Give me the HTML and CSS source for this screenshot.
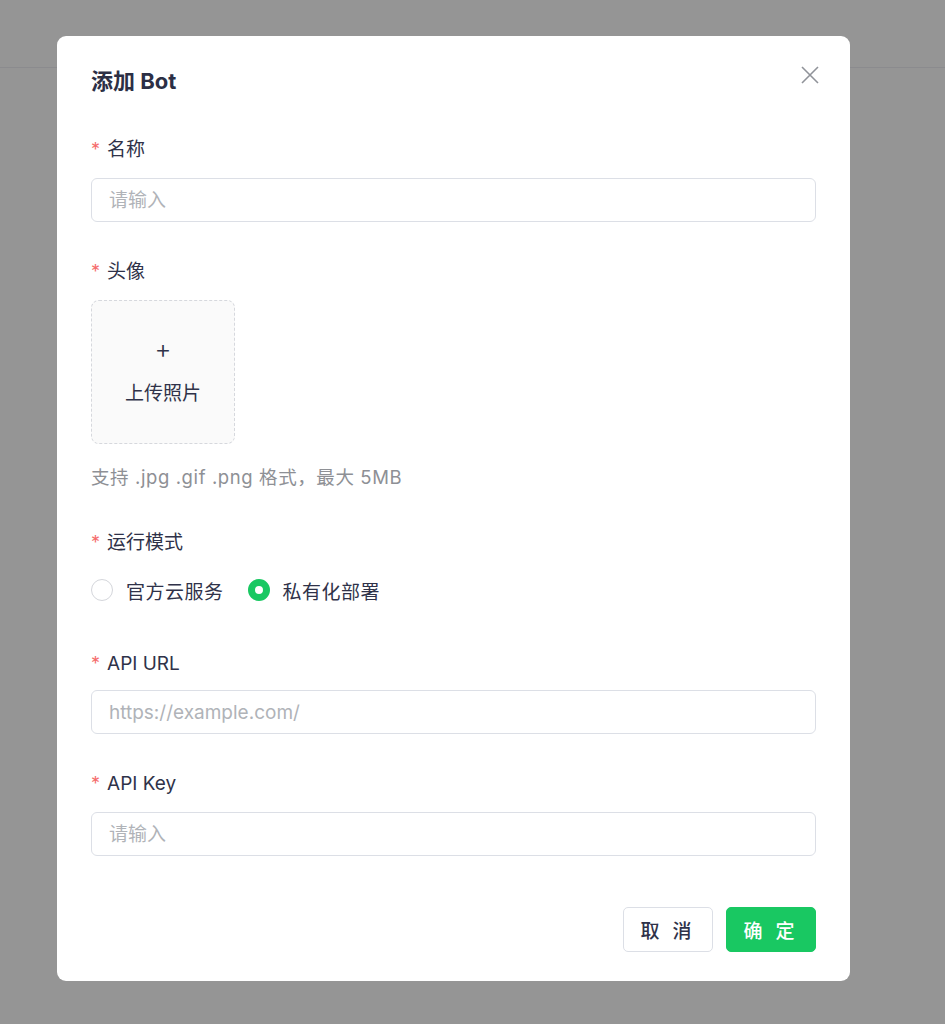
FILE: index.html
```html
<!DOCTYPE html>
<html lang="zh-CN">
<head>
    <meta charset="UTF-8">
    <meta name="viewport" content="width=device-width, initial-scale=1.0">
    <title>添加 Bot</title>
    <link rel="stylesheet" href="styles.css">
</head>
<body>
    <div class="page-header"></div>

    <div class="overlay">
        <div class="dialog">
            <div class="dialog-header">
                <span class="dialog-title">添加 Bot</span>
                <button class="dialog-close" aria-label="关闭">
                    <svg width="20" height="20" viewBox="0 0 20 20">
                        <path d="M2 2 L18 18 M18 2 L2 18" stroke="#909399" stroke-width="1.6" fill="none"/>
                    </svg>
                </button>
            </div>

            <form class="form">
                <div class="form-item">
                    <label class="form-label"><span class="req">*</span>名称</label>
                    <input class="input" type="text" placeholder="请输入">
                </div>

                <div class="form-item">
                    <label class="form-label"><span class="req">*</span>头像</label>
                    <div class="upload">
                        <span class="upload-plus">+</span>
                        <span class="upload-text">上传照片</span>
                    </div>
                    <div class="form-tip">支持 .jpg .gif .png 格式，最大 5MB</div>
                </div>

                <div class="form-item">
                    <label class="form-label"><span class="req">*</span>运行模式</label>
                    <div class="radio-group">
                        <label class="radio">
                            <span class="radio-circle"></span>
                            <span class="radio-label">官方云服务</span>
                        </label>
                        <label class="radio checked">
                            <span class="radio-circle"></span>
                            <span class="radio-label">私有化部署</span>
                        </label>
                    </div>
                </div>

                <div class="form-item">
                    <label class="form-label"><span class="req">*</span>API URL</label>
                    <input class="input" type="text" placeholder="https://example.com/">
                </div>

                <div class="form-item">
                    <label class="form-label"><span class="req">*</span>API Key</label>
                    <input class="input" type="text" placeholder="请输入">
                </div>
            </form>

            <div class="dialog-footer">
                <button class="btn">取 消</button>
                <button class="btn btn-primary">确 定</button>
            </div>
        </div>
    </div>
</body>
</html>
```

FILE: styles.css
```css
* {
    box-sizing: border-box;
}
body {
    margin: 0;
    background: #959595;
    font-family: Inter, "Noto Sans CJK SC", sans-serif;
    color: #2f3249;
}
.page-header {
    height: 68px;
    border-bottom: 1px solid #8b8b8e;
}
.overlay {
    position: absolute;
    top: 0;
    left: 0;
    right: 0;
    bottom: 0;
}
.dialog {
    margin: 36px 0 0 57px;
    width: 793px;
    height: 945px;
    background: #fff;
    border-radius: 9px;
    padding: 0 34px;
    display: flex;
    flex-direction: column;
}
.dialog-header {
    display: flex;
    justify-content: space-between;
    align-items: center;
    padding-top: 30px;
    height: 60px;
}
.dialog-title {
    font-size: 22px;
    font-weight: 700;
    color: #2c2f45;
    line-height: 30px;
}
.dialog-close {
    border: none;
    background: none;
    padding: 0;
    margin: -12px -4px 0 0;
    width: 20px;
    height: 20px;
    cursor: pointer;
}
.form {
    margin-top: 40px;
}
.form-item {
    margin-bottom: 36px;
}
.form-label {
    display: block;
    font-size: 19px;
    line-height: 28px;
    margin-bottom: 14px;
}
.req {
    color: #f56c6c;
    margin-right: 7px;
    font-size: 18px;
}
.input {
    display: block;
    width: 100%;
    height: 44px;
    border: 1px solid #dcdfe6;
    border-radius: 6px;
    padding: 0 17px;
    font-family: inherit;
    font-size: 19px;
    color: #2f3249;
    outline: none;
}
.input::placeholder {
    color: #b0b3b8;
}
.upload {
    width: 144px;
    height: 144px;
    border: 1.5px dashed #d6d8dd;
    border-radius: 8px;
    background: #fafafa;
    display: flex;
    flex-direction: column;
    align-items: center;
    justify-content: center;
}
.upload-plus {
    font-size: 26px;
    line-height: 26px;
    font-weight: 300;
    margin-top: -4px;
}
.upload-text {
    font-size: 19px;
    margin-top: 16px;
}
.form-tip {
    margin-top: 19px;
    font-size: 18.5px;
    line-height: 28px;
    color: #8e9095;
    letter-spacing: 0.6px;
}
.form-item:nth-child(2) {
    margin-bottom: 38px;
}
.radio-group {
    display: flex;
    gap: 24px;
    height: 40px;
    align-items: center;
    margin-top: 13px;
}
.form-item:nth-child(3) {
    margin-bottom: 40px;
}
.form-item:nth-child(3) .form-label {
    margin-bottom: 0;
}
.form-item:nth-child(4) .form-label {
    margin-bottom: 12px;
}
.radio {
    display: flex;
    align-items: center;
    gap: 13px;
    font-size: 19px;
    letter-spacing: 0.5px;
}
.radio-circle {
    width: 22px;
    height: 22px;
    border-radius: 50%;
    border: 1px solid #d4d6db;
    background: #fff;
}
.radio.checked .radio-circle {
    border: 7px solid #19c862;
    background: #fff;
}
.dialog-footer {
    margin-top: auto;
    display: flex;
    justify-content: flex-end;
    gap: 13px;
    padding-bottom: 29px;
}
.btn {
    width: 90px;
    height: 45px;
    border: 1px solid #dcdfe6;
    border-radius: 5px;
    background: #fff;
    font-family: inherit;
    font-size: 19px;
    font-weight: 500;
    letter-spacing: 4px;
    color: #2f3249;
    cursor: pointer;
}
.btn-primary {
    background: #19c862;
    border-color: #19c862;
    color: #fff;
}
```
